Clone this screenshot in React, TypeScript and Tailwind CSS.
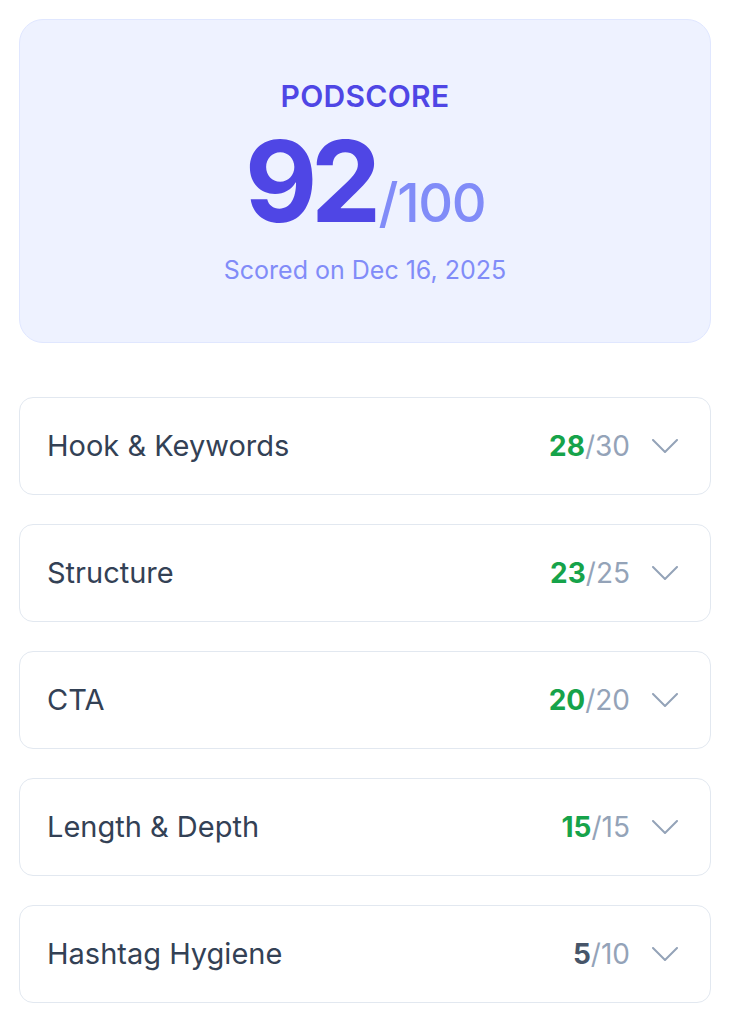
const rows = [
  { label: "Hook & Keywords", score: 28, max: 30 },
  { label: "Structure", score: 23, max: 25 },
  { label: "CTA", score: 20, max: 20 },
  { label: "Length & Depth", score: 15, max: 15 },
  { label: "Hashtag Hygiene", score: 5, max: 10 },
]

function Chevron() {
  return (
    <svg width="26" height="14" viewBox="0 0 26 14" fill="none" className="text-[#94a3b8]">
      <path d="M1 1l12 12L25 1" stroke="currentColor" strokeWidth="2" strokeLinecap="round" strokeLinejoin="round" />
    </svg>
  )
}

export default function App() {
  return (
    <div className="flex min-h-[1020px] w-[730px] flex-col gap-[54px] bg-white px-[19px] pt-[19px] font-['Inter',sans-serif]">
      <div className="flex flex-col items-center rounded-[24px] border border-[#e0e7ff] bg-[#eef2ff] pb-[59px] pt-[61px]">
        <div className="text-[30px] font-semibold leading-none tracking-[0.01em] text-[#4f46e5]">PODSCORE</div>
        <div className="mt-[14px] flex items-baseline">
          <span className="text-[112px] font-bold leading-none tracking-[-0.06em] text-[#4f46e5]">92</span>
          <span className="ml-[4px] text-[54px] font-medium leading-none tracking-tight text-[#818cf8]">/100</span>
        </div>
        <div className="mt-[21px] text-[25px] leading-none text-[#818cf8]">Scored on Dec 16, 2025</div>
      </div>

      <div className="flex flex-col gap-[29px]">
        {rows.map((r) => (
          <div
            key={r.label}
            className="flex h-[98px] items-center justify-between rounded-[14px] border border-[#e2e8f0] bg-white pl-[27px] pr-[32px]"
          >
            <span className="text-[29px] font-normal text-[#334155]">{r.label}</span>
            <div className="flex items-center gap-[22px]">
              <span className="text-[28px]">
                <span className={r.score / r.max >= 0.75 ? "font-bold text-[#16a34a]" : "font-bold text-[#475569]"}>
                  {r.score}
                </span>
                <span className="text-[#94a3b8]">/{r.max}</span>
              </span>
              <Chevron />
            </div>
          </div>
        ))}
      </div>
    </div>
  )
}
